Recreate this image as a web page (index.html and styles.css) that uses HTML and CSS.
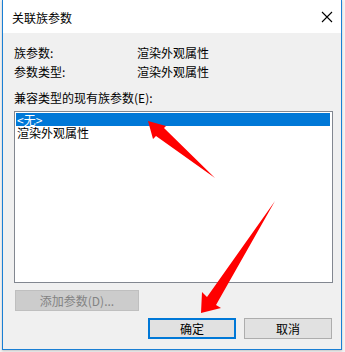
FILE: index.html
```html
<!DOCTYPE html>
<html>
<head>
<meta charset="utf-8">
<link rel="stylesheet" href="styles.css">
</head>
<body>
<div class="window">
  <div class="titlebar">
    <span class="title">关联族参数</span>
    <svg class="close" width="12" height="12" viewBox="0 0 12 12"><path d="M1 1 L11 11 M11 1 L1 11" stroke="#000" stroke-width="1.1" fill="none"/></svg>
  </div>
  <div class="content">
    <div class="row"><span class="lbl">族参数:</span><span class="val">渲染外观属性</span></div>
    <div class="row"><span class="lbl">参数类型:</span><span class="val">渲染外观属性</span></div>
    <div class="row caption">兼容类型的现有族参数(E):</div>
    <div class="listbox">
      <div class="item selected">&lt;无&gt;</div>
      <div class="item">渲染外观属性</div>
    </div>
    <div class="btn disabled add">添加参数(D)...</div>
    <div class="actions">
      <div class="btn primary">确定</div>
      <div class="btn">取消</div>
    </div>
  </div>
  <svg class="arrows" width="345" height="352" viewBox="0 0 345 352">
    <polygon fill="#ff0000" points="147,121 165,126 163,128 214,178 155,136 152,139"/>
    <polygon fill="#ff0000" points="200,313 201,292 206,297 274,201 215,305 220,308"/>
  </svg>
</div>
</body>
</html>
```
FILE: styles.css
```css
html, body {
  margin: 0;
  padding: 0;
}
body {
  background: #f3f3f3;
  width: 345px;
  height: 352px;
  overflow: hidden;
  font-family: "Noto Sans CJK SC", "Microsoft YaHei", sans-serif;
  font-size: 12px;
  color: #000;
}
.window {
  margin-left: 2px;
  width: 338px;
  height: 349px;
  border: 1px solid #1a7fd4;
  border-top: none;
  background: #f0f0f0;
  position: relative;
  box-shadow: 0 1px 2px rgba(0,0,0,0.2);
}
.titlebar {
  height: 33px;
  background: #fff;
  display: flex;
  align-items: center;
  justify-content: space-between;
  padding: 0 8px 0 9px;
}
.title {
  line-height: 14px;
  margin-top: 3px;
}
.close {
  margin-top: 1px;
}
.content {
  padding: 10px 0 0 0;
}
.row {
  display: flex;
  height: 19px;
  line-height: 19px;
  padding-left: 11px;
}
.lbl {
  width: 123px;
}
.caption {
  margin-top: 7px;
}
.listbox {
  margin: 4px 0 0 11px;
  width: 316px;
  height: 169px;
  border: 1px solid #828790;
  background: #fff;
  padding: 1px 0 0 1px;
  box-sizing: content-box;
}
.item {
  height: 13px;
  line-height: 13px;
  padding-left: 1px;
  width: 313px;
  white-space: nowrap;
}
.item.selected {
  background: #0078d7;
  color: #fff;
}
.btn {
  box-sizing: border-box;
  width: 88px;
  height: 21px;
  border: 1px solid #adadad;
  background: #e1e1e1;
  text-align: center;
  line-height: 19px;
}
.btn.primary {
  border: 2px solid #0078d7;
  line-height: 17px;
}
.btn.disabled {
  background: #cccccc;
  border-color: #bfbfbf;
  color: #838383;
}
.add {
  margin: 7px 0 0 12px;
  width: 124px;
}
.actions {
  display: flex;
  justify-content: flex-end;
  gap: 8px;
  padding-right: 9px;
  margin-top: 7px;
}
.arrows {
  position: absolute;
  left: -2px;
  top: 0;
  pointer-events: none;
}
```
